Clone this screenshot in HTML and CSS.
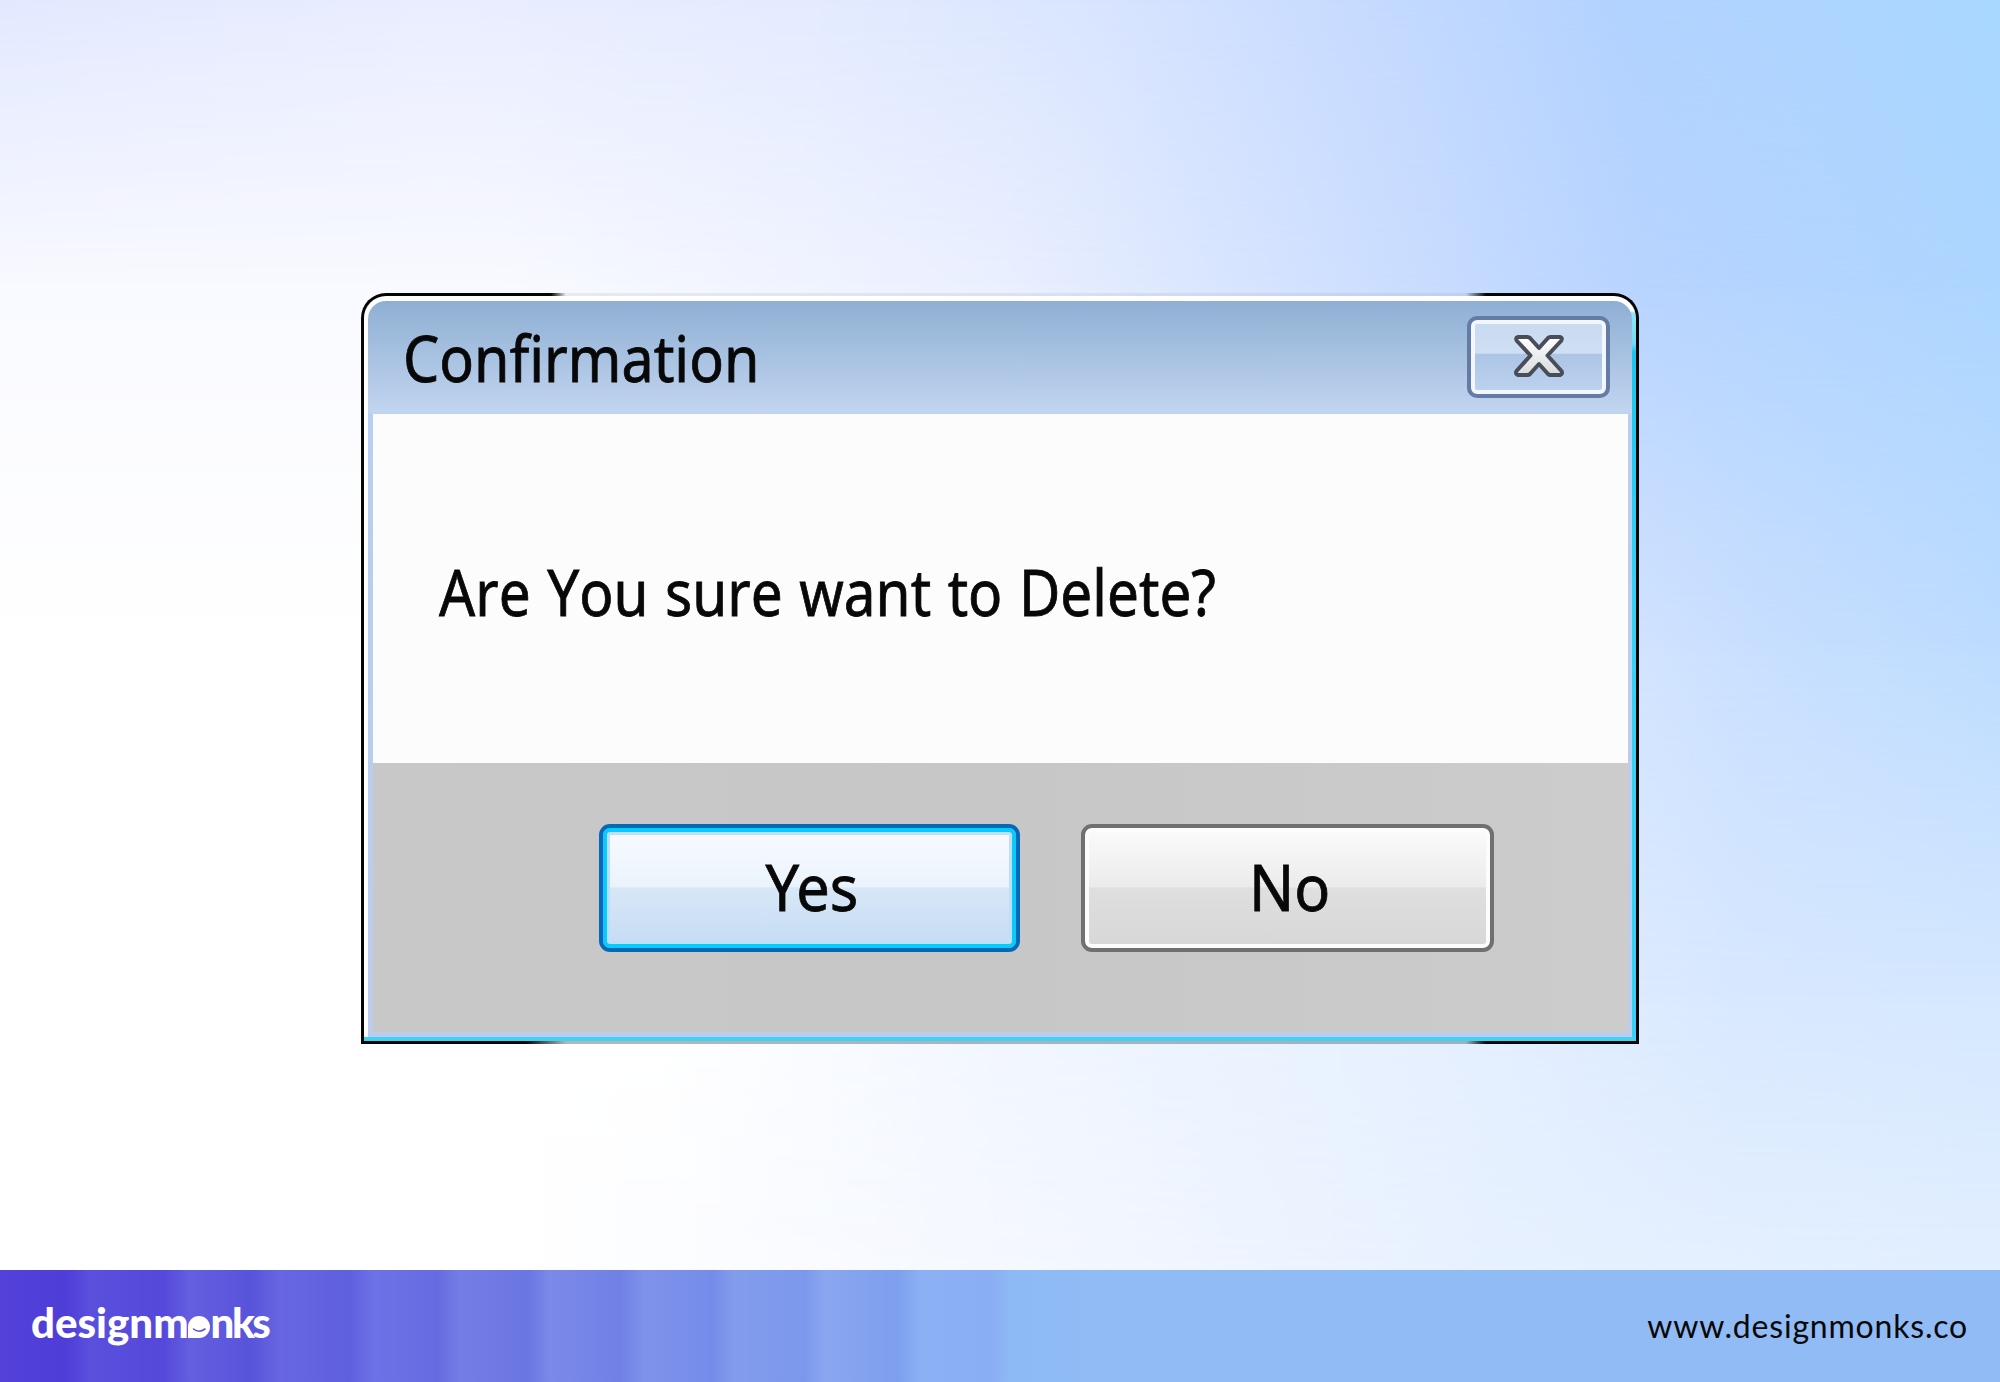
FILE: index.html
```html
<!DOCTYPE html>
<html lang="en">
<head>
<meta charset="utf-8">
<title>Confirmation</title>
<link rel="stylesheet" href="styles.css">
</head>
<body>
<main class="stage">
  <div class="sky sky-1"></div>
  <div class="sky sky-2"></div>
  <div class="sky sky-3"></div>
  <div class="sky sky-4"></div>
  <section class="dialog" role="dialog" aria-labelledby="title">
    <div class="frame">
      <div class="glass">
      <header class="titlebar">
        <h1 class="label title" id="title">Confirmation</h1>
        <button class="close" aria-label="Close">
          <svg width="54" height="46" viewBox="0 0 54 46">
            <defs><linearGradient id="x" x1="0" y1="0" x2="0" y2="1"><stop offset="0" stop-color="#fff"/><stop offset="1" stop-color="#d9dadd"/></linearGradient></defs>
            <path d="M6 4H15.500Q17 4 18 5L27 15L36 5Q37 4 38.500 4H48Q51 4.500 49 8L35.500 22.500L49.500 38Q51 41 48 42H38.500Q37 42 36 41L27 31L18 41Q17 42 15.500 42H6Q3 41 4.500 38L18.500 22.500L5 8Q3 4.500 6 4Z" fill="url(#x)" stroke="#474d59" stroke-width="4" stroke-linejoin="round"/>
          </svg>
        </button>
      </header>
      <div class="content">
        <p class="label message">Are You sure want to Delete?</p>
      </div>
      <footer class="actions">
        <button class="btn yes"><span class="label">Yes</span></button>
        <button class="btn no"><span class="label">No</span></button>
      </footer>
      </div>
    </div>
  </section>
</main>
<footer class="brandbar">
  <div class="logo"><span>designm</span><svg class="face" width="22" height="22" viewBox="0 0 22 22"><path d="M0 22V11A11 11 0 1 1 11 22Z" fill="#fff"/><path d="M5.500 13Q11 17.500 17 13" fill="none" stroke="#5b51dc" stroke-width="1.600" stroke-linecap="round"/></svg><span class="tail">nks</span></div>
  <div class="url">www.designmonks.co</div>
</footer>
</body>
</html>
```
FILE: styles.css
```css
* { box-sizing: border-box; }
body {
  margin: 0;
  width: 2000px;
  height: 1382px;
  display: flex;
  flex-direction: column;
  overflow: hidden;
  font-family: "Noto Sans", "Open Sans", sans-serif;
  color: #080808;
}
/* The backdrop stacks horizontal gradients, each fading into the one below it. */
.stage {
  height: 1270px;
  display: grid;
  grid-template: 1270px / 2000px;
  background: linear-gradient(90deg, #fff 25%, #f3f7ff 55%, #e7f1ff 75%, #e2efff 100%);
}
.stage > * { grid-area: 1 / 1; }
.sky-1 {
  background: linear-gradient(90deg, #fff 33%, #f1f6ff 50%, #e3eeff 75%, #d8e8ff 87%, #d5e8ff 100%);
  -webkit-mask-image: linear-gradient(#000 1000px, transparent 1270px);
}
.sky-2 {
  background: linear-gradient(90deg, #fff 25%, #f5f8ff 50%, #d9e7ff 77%, #c8dfff 88%, #bddcff 100%);
  -webkit-mask-image: linear-gradient(#000 650px, transparent 1000px);
}
.sky-3 {
  background: linear-gradient(90deg, #f9faff 0, #f9faff 25%, #ebf0ff 50%, #d3e2ff 65%, #b8d4ff 82%, #add6ff 100%);
  -webkit-mask-image: linear-gradient(#000 290px, transparent 650px);
}
.sky-4 {
  background: linear-gradient(90deg, #e2e8ff 0, #e9edff 22%, #e4ebff 40%, #d8e4ff 55%, #c6daff 68%, #b2d2ff 81%, #a8d7ff 100%);
  -webkit-mask-image: linear-gradient(#000, transparent 290px);
}
.dialog {
  z-index: 1;
  width: 1278px;
  height: 751px;
  margin: 293px 0 0 361px;
  padding: 3px;
  border-radius: 25px 25px 0 0;
  background:
    linear-gradient(90deg, #050505 190px, rgba(120,130,140,.12) 205px, rgba(120,130,140,.12) 1105px, #050505 1125px) top / 100% 376px no-repeat,
    linear-gradient(90deg, #050505 165px, rgba(100,110,120,.5) 205px, rgba(100,110,120,.5) 1105px, #050505 1125px) bottom / 100% 376px no-repeat;
}
.frame {
  height: 745px;
  padding: 5px 4px 4px;
  border-radius: 22px 22px 0 0;
  background:
    linear-gradient(#40d2f2, #40d2f2) bottom / 100% 4px no-repeat,
    linear-gradient(#fff 15px, #8fe6f6 17px, #6fdcf3 48px, #17c8ec 56px, #35d2f5 300px) right / 50% 100% no-repeat,
    #fff;
}
.glass {
  height: 736px;
  padding: 0 4px 5px 5px;
  border-radius: 18px 18px 0 0;
  background: linear-gradient(#8eafd3, #c2d5f0 112px, #b7cff2 114px, #bccced);
  display: flex;
  flex-direction: column;
}
.titlebar {
  height: 113px;
  display: flex;
  justify-content: space-between;
  align-items: flex-start;
  padding: 15px 18px 0 31px;
}
.label {
  margin: 0;
  font-size: 64px;
  line-height: 88px;
  font-weight: 400;
  white-space: nowrap;
  transform-origin: 0 50%;
  -webkit-text-stroke: .8px #080808;
}
.title { margin: -2px 0 0 -1px; transform: scaleX(.897); }
.close {
  width: 143px;
  height: 82px;
  padding: 0 0 3px;
  display: grid;
  place-items: center;
  border: 4px solid #647ba5;
  border-radius: 10px;
  background: linear-gradient(#c8daf1, #cfdff3 45%, #acc5e4 46%, #bed3f0);
  box-shadow: inset 0 0 0 4px #f3f7fd;
}
.content {
  height: 349px;
  padding: 134px 0 0 66px;
  background: #fcfcfc;
}
.message { word-spacing: 2px; font-kerning: none; transform: scaleX(.886); }
.actions {
  flex: 1;
  display: flex;
  gap: 61px;
  align-items: flex-start;
  padding: 61px 0 0 226px;
  background: linear-gradient(90deg, #c8c8c8, #c7c7c8 50%, #cccccd);
}
.btn {
  height: 128px;
  display: grid;
  place-items: center;
  padding: 0 0 2px 4px;
  border-radius: 11px;
  font-family: inherit;
  color: inherit;
}
.btn .label { transform: scaleX(.93); transform-origin: 50% 50%; }
.yes {
  width: 421px;
  border: 4px solid #0868b8;
  background: linear-gradient(#f8fbff, #eaf3fc 49%, #d7e7f6 50%, #c5dcf5);
  box-shadow: inset 0 0 0 4px #05ccfb, inset 0 0 0 7px #bfdff8;
}
.no {
  width: 413px;
  border: 4px solid #707070;
  background: linear-gradient(#fbfbfc, #ebebec 49%, #dfdfdf 50%, #d7d7d7);
  box-shadow: inset 0 0 0 4px #fcfcfc;
}
.brandbar {
  height: 112px;
  display: flex;
  justify-content: space-between;
  padding: 0 32px 0 31px;
  font-family: Lato, sans-serif;
  background: linear-gradient(90deg, #5341da 0, #4f3dd8 66px, #5a50dd 90px, #5548da 163px, #645fe0 190px, #5853db 250px, #6866e2 280px, #5f60df 350px, #6d73e6 375px, #666be1 437px, #737de5 460px, #6a76e3 528px, #7b8ae9 550px, #7080e5 620px, #7f92eb 645px, #758cea 712px, #839cec 735px, #7b98ec 805px, #8aa6f0 825px, #7d9fee 898px, #8bb0f3 920px, #8aaef3 990px, #8db9f5 1010px, #90bbf5 1100px);
}
.logo {
  display: flex;
  margin-top: 26px;
  font-size: 42px;
  line-height: 52px;
  font-weight: 900;
  color: #fff;
}
.face { margin: 20px 1px 0 -1px; }
.tail { letter-spacing: -2.5px; }
.url {
  margin-top: 37px;
  font-size: 32px;
  line-height: 38px;
  letter-spacing: .8px;
}
```
